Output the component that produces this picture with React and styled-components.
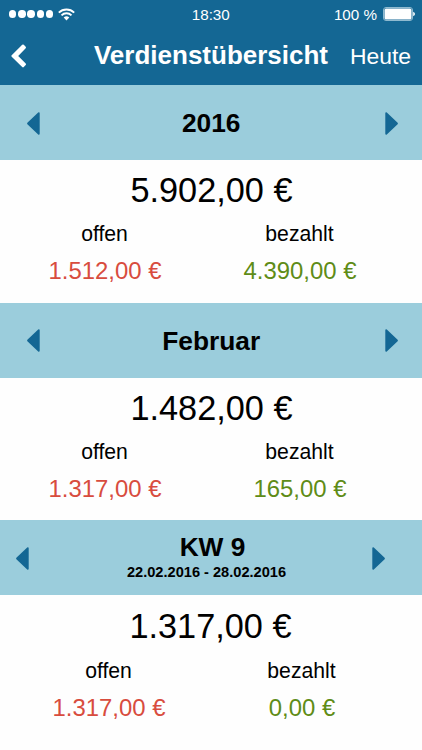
import styled, { createGlobalStyle } from 'styled-components';

const GlobalStyle = createGlobalStyle`
  body {
    margin: 0;
    background: #fefefe;
    font-family: 'Liberation Sans', Arial, sans-serif;
    color: #000;
  }
`;

const Screen = styled.main`
  width: 422px;
  height: 750px;
  overflow: hidden;
  background: #fefefe;
`;

const Header = styled.header`
  height: 85px;
  background: #146794;
  color: #fff;
`;

const StatusBar = styled.div`
  display: grid;
  grid-template-columns: 1fr auto 1fr;
  align-items: center;
  height: 28px;
  padding: 0 7.5px 0 9px;
  font-size: 15.2px;
  line-height: 27px;
`;

const Signal = styled.div`
  display: flex;
  align-items: center;
  gap: 5px;
`;

const Dots = styled.div`
  display: flex;
  gap: 1.8px;

  i {
    width: 7.4px;
    height: 7.4px;
    border-radius: 50%;
    background: #fff;
  }
`;

const Clock = styled.span`
  margin-right: 2px;
`;

const Battery = styled.div`
  display: flex;
  align-items: center;
  justify-content: flex-end;
  gap: 5.5px;
`;

const NavBar = styled.nav`
  display: grid;
  grid-template-columns: 1fr auto 1fr;
  height: 56px;
  padding: 0 11px;
  line-height: 55px;
`;

const BackButton = styled.button`
  display: flex;
  padding: 16px 0 0;
  border: 0;
  background: none;
  color: #fff;
`;

const Title = styled.h1`
  margin: 0;
  font-size: 26px;
  font-weight: 700;
`;

const TodayLink = styled.span`
  font-size: 22.9px;
  line-height: 56px;
  text-align: right;
`;

const Section = styled.section`
  height: 217.6px;
`;

const Band = styled.div`
  display: flex;
  align-items: center;
  justify-content: space-between;
  height: 75px;
  padding: ${({ $shifted }) => ($shifted ? '1px 37px 0 16px' : '1px 24px 0 26.5px')};
  box-sizing: border-box;
  background: #9bcddc;
  color: #146794;
`;

const Period = styled.div`
  flex: 1;
  padding-left: ${({ $shifted }) => ($shifted ? '24px' : '0')};
  margin-left: ${({ $shifted }) => ($shifted ? '0' : '-2px')};
  color: #000;
  font-weight: 700;
  text-align: center;
`;

const PeriodName = styled.div`
  font-size: 26.3px;
  line-height: 30px;
`;

const PeriodRange = styled.div`
  padding: 0 12px 2px 0;
  font-size: 14.6px;
  line-height: 20px;
`;

const Body = styled.div`
  padding-top: ${({ $shifted }) => ($shifted ? '0.6px' : '0')};
`;

const Total = styled.div`
  padding-left: ${({ $shifted }) => ($shifted ? '0' : '1px')};
  margin-left: ${({ $shifted }) => ($shifted ? '-1px' : '0')};
  font-size: 34.3px;
  line-height: 60px;
  text-align: center;
`;

const Split = styled.div`
  display: grid;
  grid-template-columns: ${({ $shifted }) => ($shifted ? '193px 193px' : '195px 195px')};
  padding: ${({ $shifted }) => ($shifted ? '1px 0 0 12px' : '0 0 0 7px')};
  text-align: center;
`;

const Label = styled.div`
  font-size: 21.2px;
  line-height: 27px;
`;

const Amount = styled.div`
  padding-left: 1px;
  font-size: 23.9px;
  line-height: 47px;
  color: ${({ $paid }) => ($paid ? '#5f8c17' : '#d84c3e')};
`;

const periods = [
  { name: '2016', total: '5.902,00 €', open: '1.512,00 €', paid: '4.390,00 €' },
  { name: 'Februar', total: '1.482,00 €', open: '1.317,00 €', paid: '165,00 €' },
  { name: 'KW 9', range: '22.02.2016 - 28.02.2016', total: '1.317,00 €', open: '1.317,00 €', paid: '0,00 €' },
];

function Arrow({ right }) {
  return (
    <svg width="13" height="23" viewBox="0 0 13 23">
      <path
        d={right
          ? 'M1.2 1.2V21.8L12 11.5Z'
          : 'M11.8 1.2V21.8L1 11.5Z'}
        fill="currentColor"
        stroke="currentColor"
        strokeWidth="1.8"
        strokeLinejoin="round"
      />
    </svg>
  );
}

function PeriodSection({ period }) {
  // the week view carries a date range and sits slightly off the month/year grid
  const shifted = Boolean(period.range);

  return (
    <Section>
      <Band $shifted={shifted}>
        <Arrow />
        <Period $shifted={shifted}>
          <PeriodName>{period.name}</PeriodName>
          {period.range && <PeriodRange>{period.range}</PeriodRange>}
        </Period>
        <Arrow right />
      </Band>
      <Body $shifted={shifted}>
        <Total $shifted={shifted}>{period.total}</Total>
        <Split $shifted={shifted}>
          <Label>offen</Label>
          <Label>bezahlt</Label>
          <Amount>{period.open}</Amount>
          <Amount $paid>{period.paid}</Amount>
        </Split>
      </Body>
    </Section>
  );
}

export default function App() {
  return (
    <Screen>
      <GlobalStyle />
      <Header>
        <StatusBar>
          <Signal>
            <Dots><i /><i /><i /><i /><i /></Dots>
            <svg width="17" height="13" viewBox="0 0 17 13" fill="none" stroke="#fff" strokeWidth="1.9">
              <path d="M0.8 4.6a11 11 0 0 1 15.4 0" />
              <path d="M3.5 7.3a7.1 7.1 0 0 1 10 0" />
              <path d="M5.7 9.6a4 4 0 0 1 5.6 0L8.5 12.4Z" fill="#fff" stroke="none" />
            </svg>
          </Signal>
          <Clock>18:30</Clock>
          <Battery>
            <span>100 %</span>
            <svg width="32" height="14" viewBox="0 0 32 14">
              <rect x="0.5" y="0.5" width="29" height="13" rx="2.5" fill="none" stroke="#8fbad0" />
              <rect x="1.5" y="1.5" width="27" height="11" rx="1.5" fill="#fff" />
              <path d="M30.2 4.8q1.8 0.7 1.8 2.2t-1.8 2.2z" fill="#fff" />
            </svg>
          </Battery>
        </StatusBar>
        <NavBar>
          <BackButton aria-label="Zurück">
            <svg width="15" height="24" viewBox="0 0 15 24">
              <path d="M0.7 11.3 11.2 0.8Q12 0 12.8 0.8L14.7 2.7Q15.3 3.5 14.7 4.2L7.2 12 14.7 19.6Q15.3 20.4 14.7 21.1L12.8 23Q12 23.8 11.2 23L0.7 12.7Q0 12 0.7 11.3Z" fill="currentColor" />
            </svg>
          </BackButton>
          <Title>Verdienstübersicht</Title>
          <TodayLink>Heute</TodayLink>
        </NavBar>
      </Header>
      {periods.map((period) => (
        <PeriodSection key={period.name} period={period} />
      ))}
    </Screen>
  );
}
